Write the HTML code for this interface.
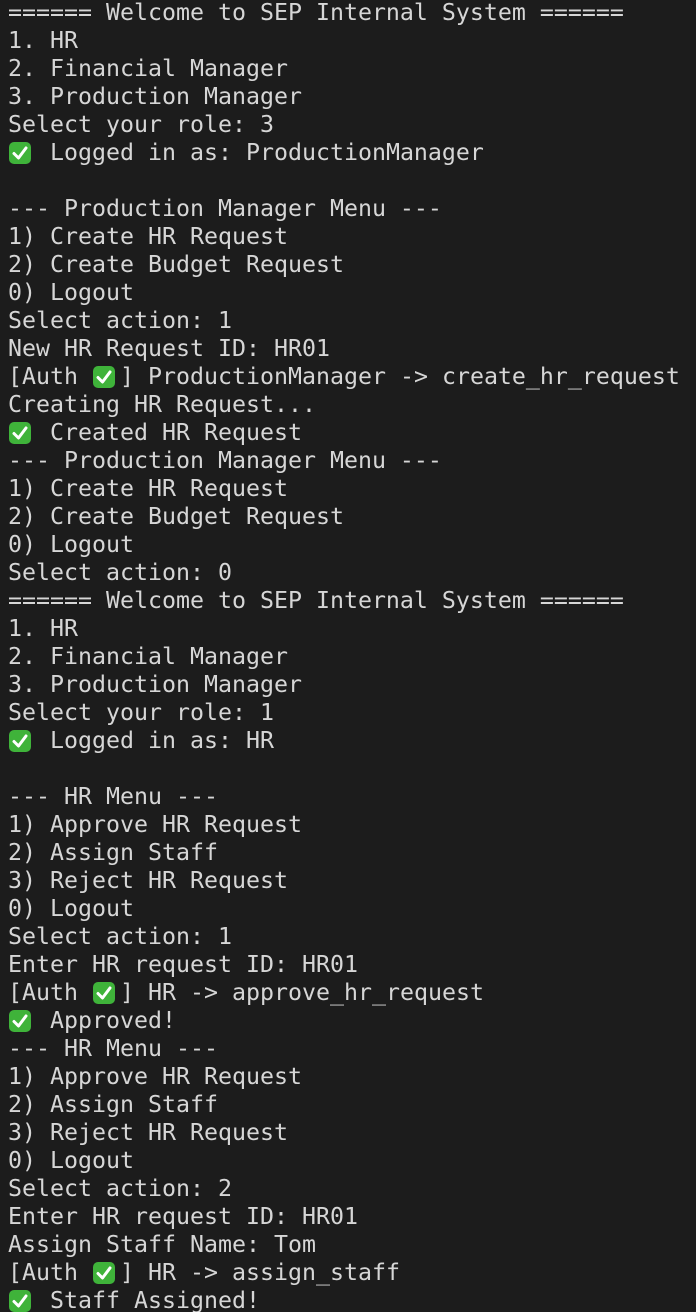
<!DOCTYPE html>
<html><head><meta charset="utf-8"><style>
html,body{margin:0;padding:0;background:#1c1c1c;width:696px;height:1312px;overflow:hidden}
pre{margin:-1px 0 0 0;padding:0 0 0 8px;font-family:"DejaVu Sans Mono","Liberation Mono",monospace;font-size:23.25px;line-height:28px;color:#d6d6d6;white-space:pre}
.e{display:inline-block;width:28px;height:22px;vertical-align:-4px;position:relative}
.e i{position:absolute;left:1px;top:0;width:22px;height:22px;border-radius:5px;background:#3fb33a}
.e svg{position:absolute;left:1px;top:0}
</style></head><body><pre>====== Welcome to SEP Internal System ======
1. HR
2. Financial Manager
3. Production Manager
Select your role: 3
<span class="e"><i></i><svg width="22" height="22"><path d="M5 11.5l4.5 4.5L17 6" stroke="#fff" stroke-width="3" fill="none" stroke-linecap="round" stroke-linejoin="round"/></svg></span> Logged in as: ProductionManager

--- Production Manager Menu ---
1) Create HR Request
2) Create Budget Request
0) Logout
Select action: 1
New HR Request ID: HR01
[Auth <span class="e"><i></i><svg width="22" height="22"><path d="M5 11.5l4.5 4.5L17 6" stroke="#fff" stroke-width="3" fill="none" stroke-linecap="round" stroke-linejoin="round"/></svg></span>] ProductionManager -&gt; create_hr_request
Creating HR Request...
<span class="e"><i></i><svg width="22" height="22"><path d="M5 11.5l4.5 4.5L17 6" stroke="#fff" stroke-width="3" fill="none" stroke-linecap="round" stroke-linejoin="round"/></svg></span> Created HR Request
--- Production Manager Menu ---
1) Create HR Request
2) Create Budget Request
0) Logout
Select action: 0
====== Welcome to SEP Internal System ======
1. HR
2. Financial Manager
3. Production Manager
Select your role: 1
<span class="e"><i></i><svg width="22" height="22"><path d="M5 11.5l4.5 4.5L17 6" stroke="#fff" stroke-width="3" fill="none" stroke-linecap="round" stroke-linejoin="round"/></svg></span> Logged in as: HR

--- HR Menu ---
1) Approve HR Request
2) Assign Staff
3) Reject HR Request
0) Logout
Select action: 1
Enter HR request ID: HR01
[Auth <span class="e"><i></i><svg width="22" height="22"><path d="M5 11.5l4.5 4.5L17 6" stroke="#fff" stroke-width="3" fill="none" stroke-linecap="round" stroke-linejoin="round"/></svg></span>] HR -&gt; approve_hr_request
<span class="e"><i></i><svg width="22" height="22"><path d="M5 11.5l4.5 4.5L17 6" stroke="#fff" stroke-width="3" fill="none" stroke-linecap="round" stroke-linejoin="round"/></svg></span> Approved!
--- HR Menu ---
1) Approve HR Request
2) Assign Staff
3) Reject HR Request
0) Logout
Select action: 2
Enter HR request ID: HR01
Assign Staff Name: Tom
[Auth <span class="e"><i></i><svg width="22" height="22"><path d="M5 11.5l4.5 4.5L17 6" stroke="#fff" stroke-width="3" fill="none" stroke-linecap="round" stroke-linejoin="round"/></svg></span>] HR -&gt; assign_staff
<span class="e"><i></i><svg width="22" height="22"><path d="M5 11.5l4.5 4.5L17 6" stroke="#fff" stroke-width="3" fill="none" stroke-linecap="round" stroke-linejoin="round"/></svg></span> Staff Assigned!</pre></body></html>
